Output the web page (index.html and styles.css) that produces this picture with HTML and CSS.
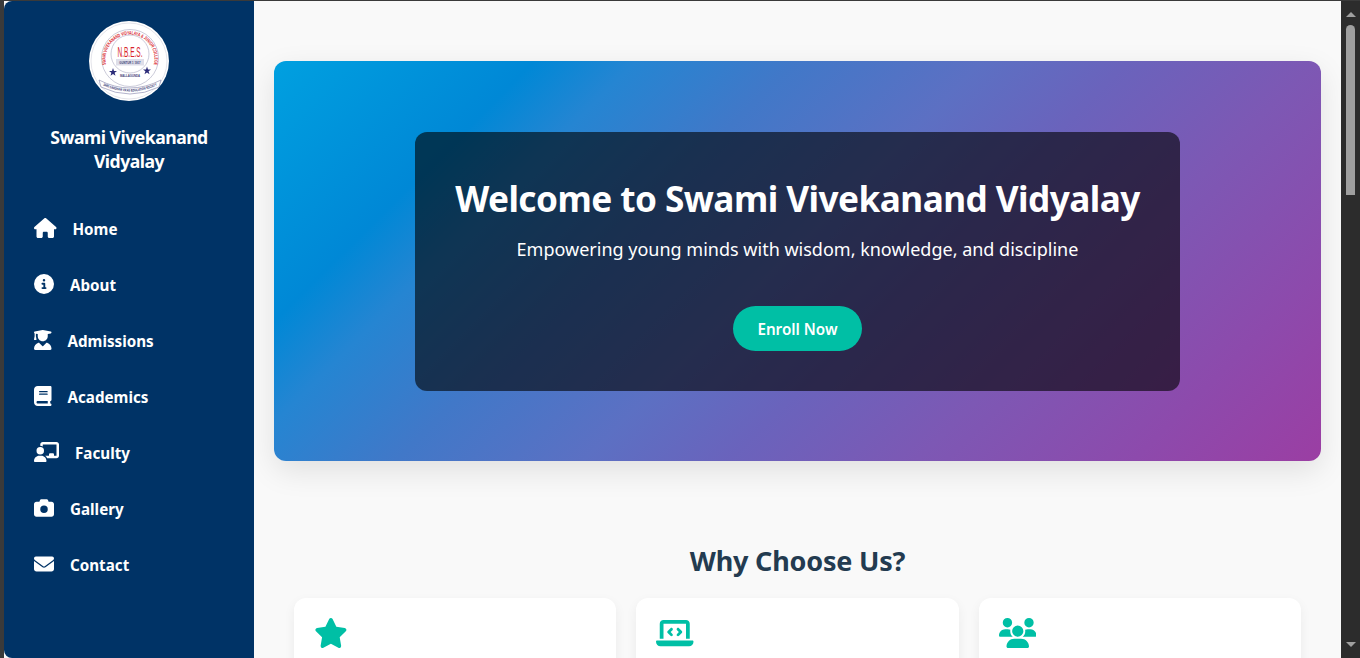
FILE: index.html
```html
<!DOCTYPE html>
<html lang="en">
<head>
<meta charset="utf-8">
<title>Swami Vivekanand Vidyalay</title>
<link rel="stylesheet" href="styles.css">
</head>
<body>
<div class="window">
  <aside class="sidebar">
    <svg class="logo" viewBox="0 0 80 80" aria-label="N.B.E.S. school crest">
      <defs>
        <path id="arcTop" d="M17 43A24.500 24.500 0 1 1 65 43"/>
        <path id="arcBottom" d="M13 64Q41 77 69 64"/>
      </defs>
      <circle cx="40" cy="40" r="40" fill="#fff"/>
      <circle cx="40" cy="40" r="38" fill="none" stroke="#c8c8d4" stroke-width=".5"/>
      <circle cx="41" cy="37" r="28.500" fill="none" stroke="#a8a8c0" stroke-width=".6"/>
      <circle cx="41" cy="33" r="19" fill="none" stroke="#a8a8c0" stroke-width=".6"/>
      <text class="crest-arc"><textPath href="#arcTop" startOffset="50%" text-anchor="middle" textLength="88" lengthAdjust="spacingAndGlyphs">SWAMI VIVEKANAND VIDYALAYA &amp; JUNIOR COLLEGE</textPath></text>
      <text class="crest-nbes" x="41" y="35.500" text-anchor="middle" textLength="25" lengthAdjust="spacingAndGlyphs">N.B.E.S.</text>
      <rect x="27" y="38" width="28" height="6.500" fill="#dedee9"/>
      <text class="crest-small" x="41" y="42.500" text-anchor="middle">GUNTUR 1 1917</text>
      <polygon class="crest-star" points="24,47 25,50 28,50 25.600,51.800 26.500,54.800 24,53 21.500,54.800 22.400,51.800 20,50 23,50"/>
      <polygon class="crest-star" points="58,45.500 59,48.500 62,48.500 59.600,50.300 60.500,53.300 58,51.500 55.500,53.300 56.400,50.300 54,48.500 57,48.500"/>
      <text class="crest-small" x="41" y="55.500" text-anchor="middle">MALLAGUNDA</text>
      <path d="M10 59Q41 75 72 59L70 66Q41 80 12 66Z" fill="#fff" stroke="#7f7fa8" stroke-width=".6"/>
      <text class="crest-band"><textPath href="#arcBottom" startOffset="50%" text-anchor="middle" textLength="56" lengthAdjust="spacingAndGlyphs">SHRI SARDHAR VIKAS EDUCATION SOCIETY</textPath></text>
    </svg>
    <h2 class="brand">Swami Vivekanand Vidyalay</h2>
    <nav class="nav">
      <a class="nav-link" href="#"><svg class="nav-icon" viewBox="0 0 576 512"><path d="M575.800 255.500c0 18-15 32.100-32 32.100h-32l.7 160.200c0 2.700-.2 5.400-.5 8.100V472c0 22.100-17.900 40-40 40H456c-1.100 0-2.200 0-3.300-.1c-1.400 .1-2.800 .1-4.200 .1H416 392c-22.100 0-40-17.900-40-40V448 384c0-17.700-14.300-32-32-32H256c-17.700 0-32 14.300-32 32v64 24c0 22.100-17.900 40-40 40H160 128.100c-1.500 0-3-.1-4.500-.2c-1.200 .1-2.400 .2-3.600 .2H104c-22.100 0-40-17.900-40-40V360c0-.9 0-1.900 .1-2.800V287.600H32c-18 0-32-14-32-32.100c0-9 3-17 10-24L266.400 8c7-7 15-8 22-8s15 2 21 7L564.800 231.500c8 7 12 15 11 24z"/></svg>Home</a>
      <a class="nav-link" href="#"><svg class="nav-icon" viewBox="0 0 512 512"><path d="M256 512A256 256 0 1 0 256 0a256 256 0 1 0 0 512zM216 336h24V272H216c-13.300 0-24-10.700-24-24s10.700-24 24-24h48c13.300 0 24 10.700 24 24v88h8c13.300 0 24 10.700 24 24s-10.700 24-24 24H216c-13.300 0-24-10.700-24-24s10.700-24 24-24zm40-208a32 32 0 1 1 0 64 32 32 0 1 1 0-64z"/></svg>About</a>
      <a class="nav-link" href="#"><svg class="nav-icon" viewBox="0 0 448 512"><path d="M219.300 .5c3.100-.6 6.300-.6 9.400 0l200 40C439.900 42.700 448 52.600 448 64s-8.100 21.300-19.300 23.500L352 102.900V160c0 70.700-57.300 128-128 128s-128-57.300-128-128V102.900L48 93.300v65.100l15.700 78.400c.9 4.700-.3 9.600-3.300 13.300s-7.600 5.900-12.400 5.900H16c-4.800 0-9.300-2.100-12.400-5.900s-4.300-8.600-3.300-13.300L16 158.400V86.600C6.500 83.300 0 74.300 0 64C0 52.600 8.100 42.700 19.300 40.500l200-40zM111.900 327.700c10.500-3.400 21.800 .4 29.400 8.500l71 75.500c6.300 6.700 17 6.700 23.300 0l71-75.500c7.600-8.100 18.900-11.900 29.400-8.500C401 348.600 448 409.400 448 481.300c0 17-13.800 30.700-30.700 30.700H30.700C13.800 512 0 498.200 0 481.300c0-71.900 47-132.700 111.900-153.600z"/></svg>Admissions</a>
      <a class="nav-link" href="#"><svg class="nav-icon" viewBox="0 0 448 512"><path d="M96 0C43 0 0 43 0 96V416c0 53 43 96 96 96H384h32c17.700 0 32-14.300 32-32s-14.300-32-32-32V384c17.700 0 32-14.300 32-32V32c0-17.700-14.300-32-32-32H384 96zm0 384H352v64H96c-17.700 0-32-14.300-32-32s14.300-32 32-32zm32-240c0-8.800 7.200-16 16-16H336c8.800 0 16 7.200 16 16s-7.200 16-16 16H144c-8.800 0-16-7.200-16-16zm16 48H336c8.800 0 16 7.200 16 16s-7.200 16-16 16H144c-8.800 0-16-7.200-16-16s7.200-16 16-16z"/></svg>Academics</a>
      <a class="nav-link" href="#"><svg class="nav-icon" viewBox="0 0 640 512"><path d="M160 64c0-35.300 28.700-64 64-64H576c35.300 0 64 28.700 64 64V352c0 35.300-28.700 64-64 64H336.800c-11.800-25.500-29.900-47.500-52.400-64H384V320c0-17.700 14.300-32 32-32h64c17.700 0 32 14.300 32 32v32h64V64L224 64v49.100C205.200 102.200 183.300 96 160 96V64zm0 64a96 96 0 1 1 0 192 96 96 0 1 1 0-192zM133.300 352h53.300C260.300 352 320 411.700 320 485.300c0 14.700-11.900 26.700-26.700 26.700H26.700C11.900 512 0 500.100 0 485.300C0 411.700 59.700 352 133.300 352z"/></svg>Faculty</a>
      <a class="nav-link" href="#"><svg class="nav-icon" viewBox="0 0 512 512"><path d="M149.100 64.800L138.700 96H64C28.700 96 0 124.700 0 160V416c0 35.300 28.700 64 64 64H448c35.300 0 64-28.700 64-64V160c0-35.300-28.700-64-64-64H373.300L362.900 64.800C356.400 45.200 338.100 32 317.400 32H194.600c-20.700 0-39 13.200-45.500 32.800zM256 192a96 96 0 1 1 0 192 96 96 0 1 1 0-192z"/></svg>Gallery</a>
      <a class="nav-link" href="#"><svg class="nav-icon" viewBox="0 0 512 512"><path d="M48 64C21.500 64 0 85.500 0 112c0 15.100 7.100 29.300 19.200 38.400L236.800 313.600c11.400 8.500 27 8.500 38.400 0L492.800 150.400c12.100-9.100 19.200-23.300 19.200-38.400c0-26.500-21.500-48-48-48H48zM0 176V384c0 35.300 28.700 64 64 64H448c35.300 0 64-28.700 64-64V176L294.400 339.200c-22.800 17.100-54 17.100-76.800 0L0 176z"/></svg>Contact</a>
    </nav>
  </aside>
  <main class="main">
    <section class="hero">
      <div class="hero-panel">
        <h1 class="hero-title">Welcome to Swami Vivekanand Vidyalay</h1>
        <p class="hero-sub">Empowering young minds with wisdom, knowledge, and discipline</p>
        <a class="btn" href="#">Enroll Now</a>
      </div>
    </section>
    <section class="why">
      <h2 class="why-title">Why Choose Us?</h2>
      <div class="cards">
        <div class="card"><svg class="card-icon" viewBox="0 0 576 512"><path d="M316.900 18C311.600 7 300.400 0 288.100 0s-23.400 7-28.800 18L195 150.300 51.400 171.500c-12 1.800-22 10.200-25.700 21.700s-.7 24.200 7.900 32.700L137.800 329 113.200 474.700c-2 12 3 24.200 12.900 31.300s23 8 33.800 2.300l128.300-68.500 128.300 68.500c10.800 5.700 23.900 4.900 33.800-2.300s14.900-19.300 12.900-31.300L438.500 329 542.700 225.900c8.600-8.500 11.700-21.200 7.900-32.700s-13.700-19.900-25.700-21.700L381.200 150.300 316.900 18z"/></svg></div>
        <div class="card"><svg class="card-icon" viewBox="0 0 640 512"><path d="M64 96c0-35.300 28.700-64 64-64H512c35.300 0 64 28.700 64 64V352H512V96H128V352H64V96zM0 403.200C0 392.600 8.600 384 19.200 384H620.800c10.600 0 19.200 8.600 19.200 19.200c0 42.400-34.400 76.800-76.800 76.800H76.800C34.400 480 0 445.600 0 403.200zM281 209l-31 31 31 31c9.400 9.400 9.400 24.600 0 33.900s-24.600 9.400-33.900 0l-48-48c-9.400-9.400-9.400-24.600 0-33.900l48-48c9.400-9.400 24.600-9.400 33.900 0s9.400 24.600 0 33.900zM393 175l48 48c9.400 9.400 9.400 24.600 0 33.900l-48 48c-9.400 9.400-24.600 9.400-33.900 0s-9.400-24.600 0-33.900l31-31-31-31c-9.400-9.400-9.400-24.600 0-33.900s24.600-9.400 33.900 0z"/></svg></div>
        <div class="card"><svg class="card-icon" viewBox="0 0 640 512"><path d="M144 0a80 80 0 1 1 0 160A80 80 0 1 1 144 0zM512 0a80 80 0 1 1 0 160A80 80 0 1 1 512 0zM0 298.700C0 239.800 47.800 192 106.700 192h42.700c15.900 0 31 3.500 44.600 9.700c-1.300 7.200-1.900 14.700-1.900 22.300c0 38.200 16.800 72.500 43.300 96c-.2 0-.4 0-.7 0H21.300C9.600 320 0 310.400 0 298.700zM405.300 320c-.2 0-.4 0-.7 0c26.600-23.500 43.300-57.800 43.300-96c0-7.600-.7-15-1.900-22.300c13.600-6.300 28.700-9.700 44.600-9.700h42.700C592.200 192 640 239.800 640 298.700c0 11.800-9.600 21.300-21.300 21.300H405.300zM224 224a96 96 0 1 1 192 0 96 96 0 1 1 -192 0zM128 485.300C128 411.700 187.700 352 261.300 352H378.700C452.300 352 512 411.700 512 485.300c0 14.700-11.900 26.700-26.700 26.700H154.700c-14.700 0-26.700-11.900-26.700-26.700z"/></svg></div>
      </div>
    </section>
  </main>
  <div class="scrollbar">
    <span class="arrow arrow-up"></span>
    <span class="thumb"></span>
    <span class="track"></span>
    <span class="arrow arrow-down"></span>
  </div>
</div>
</body>
</html>
```

FILE: styles.css
```css
* { box-sizing: border-box; }
html, body { margin: 0; height: 100%; overflow: hidden; }
body {
  background: #3a3a3a;
  font-family: "Noto Sans", "Open Sans", sans-serif;
  padding: 1px 0 0 4px;
}
.window { display: flex; height: 657px; background: #f9f9f9; }
.sidebar {
  flex: 0 0 250px;
  background: #003366;
  color: #fff;
  border-radius: 8px 0 0 8px;
  padding: 20px 30px;
  display: flex;
  flex-direction: column;
}
.logo { width: 80px; height: 80px; align-self: center; flex: none; }
.crest-arc { font: 700 5px "Liberation Sans", sans-serif; fill: #d8232a; }
.crest-nbes { font: 400 15px "Liberation Sans", sans-serif; fill: #d8232a; }
.crest-small { font: 700 2.800px "Liberation Sans", sans-serif; fill: #3f3f78; }
.crest-band { font: 700 3.600px "Liberation Sans", sans-serif; fill: #33336f; }
.crest-star { fill: #2b2b78; }
.brand {
  margin: 24px 0 0;
  font-size: 17.600px;
  line-height: 24px;
  font-weight: 700;
  letter-spacing: -0.5px;
  text-align: center;
}
.nav { display: flex; flex-direction: column; margin-top: 28px; }
.nav-link {
  display: flex;
  align-items: center;
  gap: 16px;
  height: 56px;
  color: #fff;
  text-decoration: none;
  font-size: 15.200px;
  font-weight: 700;
}
.nav-icon { height: 20px; width: auto; fill: #fff; flex: none; margin-top: -2px; }
.main { flex: 1; min-width: 0; padding: 60px 20px 0; overflow: hidden; }
.hero {
  height: 400px;
  border-radius: 12px;
  background: linear-gradient(135deg, #00a0e0 0%, #0088d6 18%, #2585d2 25%, #4178c8 36%, #5c70c3 49%, #6a63bc 59%, #7d58b4 72%, #8d4aac 87%, #9b3ea3 100%);
  box-shadow: 0 10px 30px rgba(0, 0, 0, 0.1);
  display: flex;
  align-items: center;
  justify-content: center;
}
.hero-panel {
  width: 765px;
  height: 259px;
  border-radius: 12px;
  background: rgba(0, 0, 0, 0.6);
  color: #fff;
  text-align: center;
  padding: 40px 20px 0;
}
.hero-title { margin: 0; font-size: 35.200px; line-height: 52px; font-weight: 700; letter-spacing: -0.55px; }
.hero-sub { margin: 13px 0 0; font-size: 18px; line-height: 24px; }
.btn {
  display: inline-block;
  margin-top: 45px;
  padding: 1px 24.500px 0;
  height: 45px;
  line-height: 45px;
  border-radius: 23px;
  background: #00bfa5;
  color: #fff;
  text-decoration: none;
  font-size: 15.200px;
  font-weight: 600;
}
.why { padding: 0 20px; }
.why-title {
  margin: 80px 0 0;
  text-align: center;
  font-size: 27px;
  line-height: 40px;
  letter-spacing: -0.2px;
  color: #233b50;
  font-weight: 700;
}
.cards { display: grid; grid-template-columns: repeat(3, 1fr); gap: 20px; margin-top: 17px; }
.card {
  height: 200px;
  background: #fff;
  border-radius: 12px;
  padding: 20px;
  box-shadow: 0 4px 12px rgba(0, 0, 0, 0.06);
}
.card-icon { height: 30px; width: auto; fill: #00bfa5; display: block; }
.scrollbar {
  flex: 0 0 19px;
  background: #2c2c2c;
  display: flex;
  flex-direction: column;
  align-items: center;
}
.arrow { width: 0; height: 0; border-left: 5px solid transparent; border-right: 5px solid transparent; flex: none; }
.arrow-up { border-bottom: 5px solid #a0a0a0; margin-top: 11px; }
.arrow-down { border-top: 5px solid #a0a0a0; margin-bottom: 11px; }
.thumb { width: 9px; height: 170px; margin-top: 8px; background: #9f9f9f; border-radius: 5px 5px 0 0; flex: none; }
.track { flex: 1; }
```
